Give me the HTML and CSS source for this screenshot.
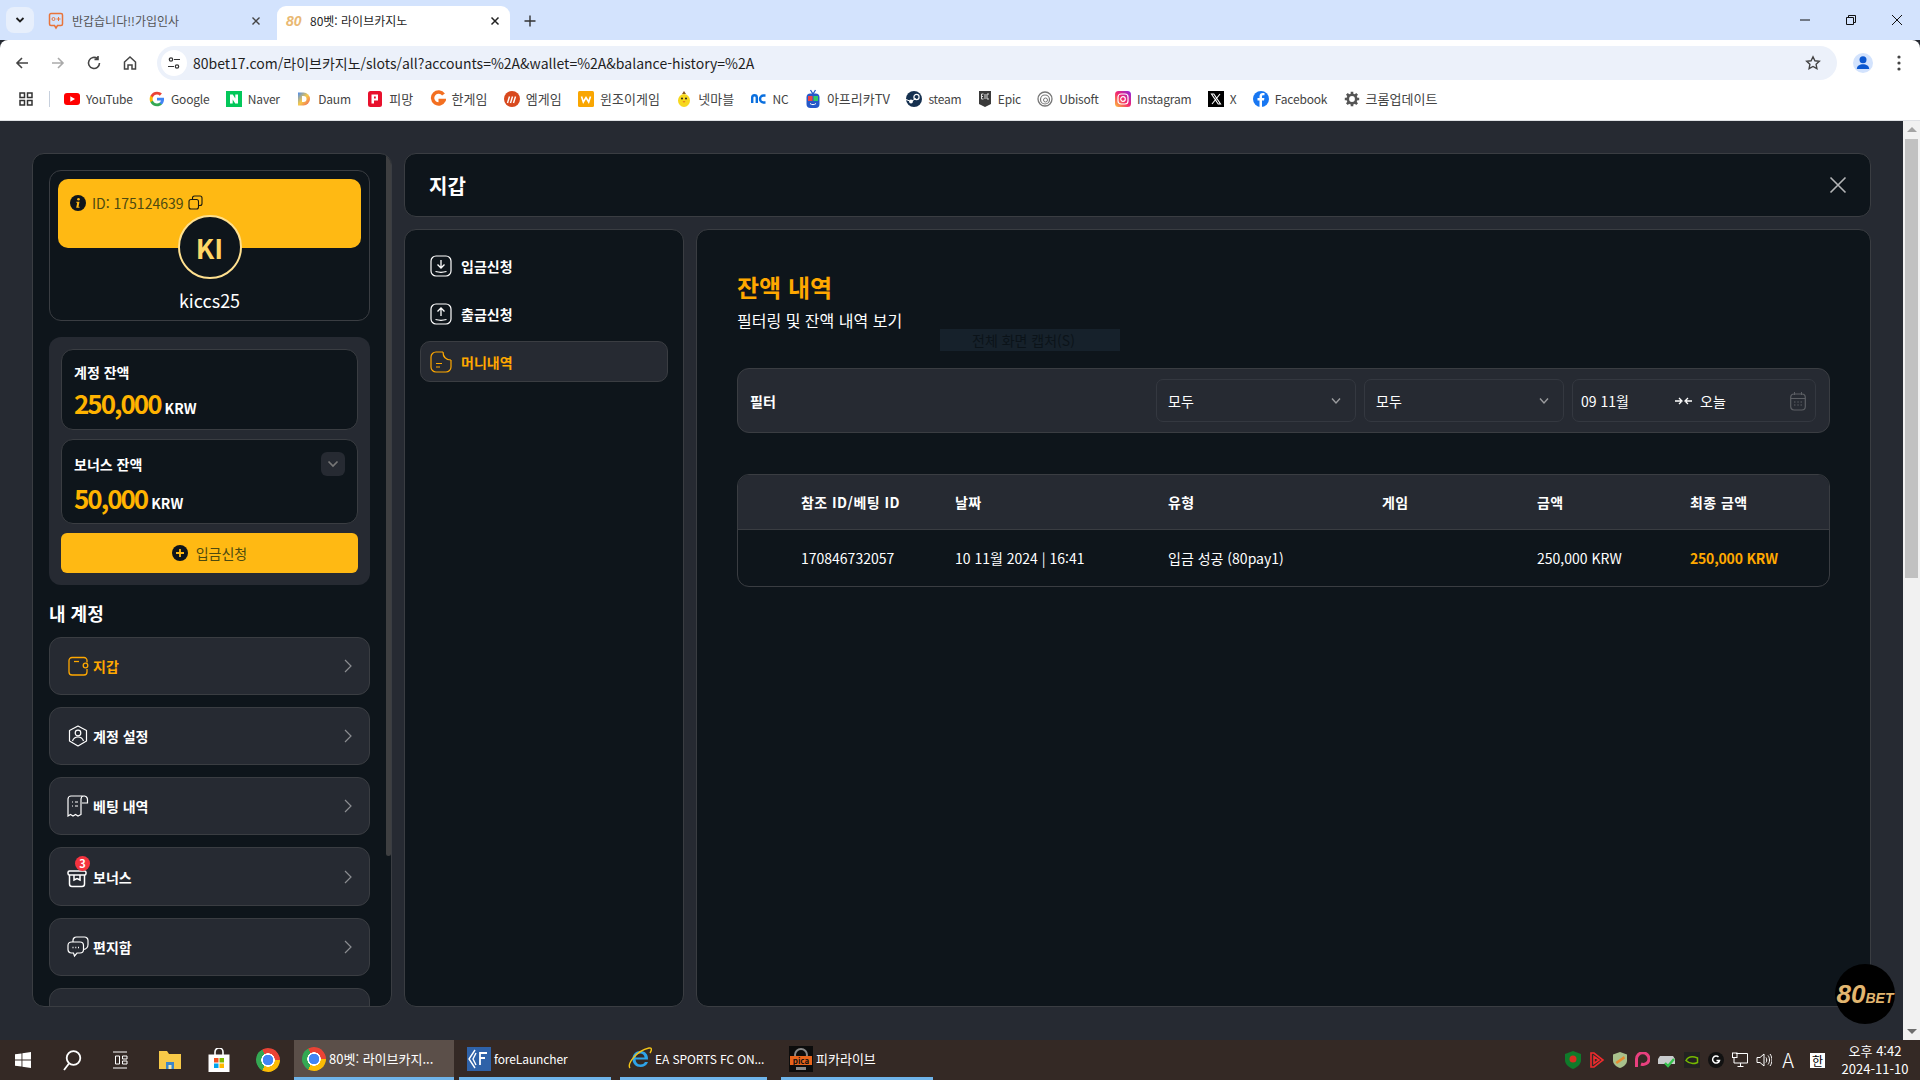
FILE: index.html
```html
<!DOCTYPE html>
<html lang="ko">
<head>
<meta charset="utf-8">
<title>80벳: 라이브카지노</title>
<link rel="stylesheet" href="styles.css">
</head>
<body>
<header class="tabstrip">
  <button class="tablist"><svg width="12" height="12" viewBox="0 0 12 12"><path d="M2.500 4l3.500 3.500L9.500 4" fill="none" stroke="#1f1f1f" stroke-width="1.800"/></svg></button>
  <div class="tab">
    <svg class="fav" width="16" height="18" viewBox="0 0 16 18"><path d="M3 1.500h10a1.500 1.500 0 0 1 1.500 1.500v9a1.500 1.500 0 0 1-1.500 1.500H9.500L8 16l-1.500-2.500H3A1.500 1.500 0 0 1 1.500 12V3A1.500 1.500 0 0 1 3 1.500z" fill="none" stroke="#e8743b" stroke-width="1.500"/><circle cx="5.500" cy="7" r="1.500" fill="none" stroke="#e8743b"/><path d="M10.500 5v4M8.500 7h4" stroke="#e8743b"/></svg>
    <span class="tab-title">반갑습니다!!가입인사</span>
    <svg class="tab-x" width="10" height="10" viewBox="0 0 10 10"><path d="M1.500 1.500l7 7M8.500 1.500l-7 7" stroke="#444" stroke-width="1.400"/></svg>
  </div>
  <div class="tab tab-active">
    <span class="fav80">80</span>
    <span class="tab-title">80벳: 라이브카지노</span>
    <svg class="tab-x" width="10" height="10" viewBox="0 0 10 10"><path d="M1.500 1.500l7 7M8.500 1.500l-7 7" stroke="#222" stroke-width="1.500"/></svg>
  </div>
  <svg class="newtab" width="12" height="12" viewBox="0 0 12 12"><path d="M6 .5v11M.5 6h11" stroke="#333" stroke-width="1.400"/></svg>
  <div class="winctl">
    <svg width="12" height="12" viewBox="0 0 12 12"><path d="M1 6h10" stroke="#111"/></svg>
    <svg width="12" height="12" viewBox="0 0 12 12"><path d="M1.500 3.500h7v7h-7zM3.500 3.500v-2h7v7h-2" fill="none" stroke="#111"/></svg>
    <svg width="12" height="12" viewBox="0 0 12 12"><path d="M1 1l10 10M11 1L1 11" stroke="#111"/></svg>
  </div>
</header>

<div class="toolbar">
  <svg class="tb" width="16" height="16" viewBox="0 0 16 16"><path d="M14 8H3M8 3L3 8l5 5" fill="none" stroke="#444" stroke-width="1.600"/></svg>
  <svg class="tb" width="16" height="16" viewBox="0 0 16 16"><path d="M2 8h11M8 3l5 5-5 5" fill="none" stroke="#aaa" stroke-width="1.600"/></svg>
  <svg class="tb" width="16" height="16" viewBox="0 0 16 16"><path d="M13.500 8A5.500 5.500 0 1 1 11.500 3.700M12 1v3.500H8.500" fill="none" stroke="#444" stroke-width="1.600"/></svg>
  <svg class="tb" width="16" height="16" viewBox="0 0 16 16"><path d="M2.500 7L8 2l5.500 5v7h-3.500v-4h-4v4H2.500z" fill="none" stroke="#444" stroke-width="1.500"/></svg>
  <div class="omnibox">
    <span class="site-ic"><svg width="14" height="14" viewBox="0 0 14 14"><circle cx="4" cy="3.500" r="1.700" fill="none" stroke="#333" stroke-width="1.200"/><path d="M7 3.500h6M1 10.500h6" stroke="#333" stroke-width="1.200"/><circle cx="10" cy="10.500" r="1.700" fill="none" stroke="#333" stroke-width="1.200"/></svg></span>
    <span class="url">80bet17.com/라이브카지노/slots/all?accounts=%2A&amp;wallet=%2A&amp;balance-history=%2A</span>
    <svg class="star" width="16" height="16" viewBox="0 0 16 16"><path d="M8 1.800l1.900 4 4.400.5-3.200 3 .8 4.400L8 11.500l-3.900 2.200.8-4.400-3.200-3 4.400-.5z" fill="none" stroke="#444" stroke-width="1.400"/></svg>
  </div>
  <span class="avatar-chip"><svg width="20" height="20" viewBox="0 0 20 20"><circle cx="10" cy="6.800" r="3.500" fill="#0b57d0"/><path d="M3.800 16c0-3.300 3-4.800 6.200-4.800s6.200 1.500 6.200 4.800z" fill="#0b57d0"/></svg></span>
  <svg class="menu-dots" width="4" height="16" viewBox="0 0 4 16"><circle cx="2" cy="2" r="1.600" fill="#444"/><circle cx="2" cy="8" r="1.600" fill="#444"/><circle cx="2" cy="14" r="1.600" fill="#444"/></svg>
</div>

<nav class="bookmarks">
  <svg class="apps" width="14" height="14" viewBox="0 0 14 14"><path d="M1 1h4.500v4.500H1zM8.500 1H13v4.500H8.500zM1 8.500h4.500V13H1zM8.500 8.500H13V13H8.500z" fill="none" stroke="#333" stroke-width="1.500"/></svg>
  <i class="bm-sep"></i>
  <a class="bm"><svg width="16" height="16" viewBox="0 0 16 16"><rect y="2" width="16" height="12" rx="3" fill="#f00"/><path d="M6.300 5.200L11 8l-4.700 2.800z" fill="#fff"/></svg>YouTube</a>
  <a class="bm"><svg width="16" height="16" viewBox="0 0 24 24"><path d="M22.560 12.250c0-.78-.07-1.530-.2-2.250H12v4.260h5.920c-.26 1.370-1.040 2.530-2.210 3.310v2.770h3.570c2.080-1.920 3.280-4.740 3.280-8.090z" fill="#4285F4"/><path d="M12 23c2.970 0 5.460-.98 7.280-2.660l-3.570-2.770c-.98.66-2.230 1.060-3.710 1.060-2.860 0-5.290-1.930-6.160-4.530H2.180v2.840C3.990 20.530 7.700 23 12 23z" fill="#34A853"/><path d="M5.840 14.090c-.22-.66-.35-1.360-.35-2.090s.13-1.430.35-2.090V7.070H2.180C1.430 8.550 1 10.220 1 12s.43 3.450 1.180 4.930l3.660-2.840z" fill="#FBBC05"/><path d="M12 5.380c1.620 0 3.060.56 4.210 1.640l3.150-3.150C17.450 2.090 14.970 1 12 1 7.700 1 3.990 3.470 2.180 7.070l3.660 2.840c.87-2.600 3.300-4.530 6.160-4.530z" fill="#EA4335"/></svg>Google</a>
  <a class="bm"><svg width="16" height="16" viewBox="0 0 16 16"><rect width="16" height="16" fill="#03c75a"/><path d="M4 3.500h2.800l2.500 4v-4H12v9H9.200l-2.500-4v4H4z" fill="#fff"/></svg>Naver</a>
  <a class="bm"><svg width="16" height="16" viewBox="0 0 16 16"><defs><linearGradient id="dg" x1="0" y1="0" x2="1" y2="1"><stop offset="0" stop-color="#4a8cf0"/><stop offset=".5" stop-color="#f7c948"/><stop offset="1" stop-color="#ee5a5a"/></linearGradient></defs><path d="M2 1.500h5.500a6.500 6.500 0 0 1 0 13H2z" fill="url(#dg)"/><path d="M6 5h1.500a3 3 0 0 1 0 6H6z" fill="#fff"/></svg>Daum</a>
  <a class="bm bm-ko"><svg width="16" height="16" viewBox="0 0 16 16"><rect x="1" width="14" height="16" rx="2.500" fill="#e8112d"/><path d="M4.500 3.500H11v6H7v3H4.500zM7 5.500v2h1.800v-2z" fill="#fff" fill-rule="evenodd"/></svg>피망</a>
  <a class="bm bm-ko"><svg width="16" height="18" viewBox="0 0 16 18"><path d="M13.500 4.500A6 6 0 1 0 14 10.500H8.500" fill="none" stroke="#f36f21" stroke-width="3.400"/></svg>한게임</a>
  <a class="bm bm-ko"><svg width="16" height="16" viewBox="0 0 16 16"><circle cx="8" cy="8" r="8" fill="#d8491e"/><path d="M3.500 12l2-6.500M6.500 12l2-6.500M9.500 12l2-6.500" stroke="#fff" stroke-width="1.400"/></svg>엠게임</a>
  <a class="bm bm-ko"><svg width="16" height="16" viewBox="0 0 16 16"><rect width="16" height="16" rx="1.500" fill="#f9a602"/><path d="M3.500 5.500l1.800 5.500 2.700-4.500 2.700 4.500 1.800-5.500" fill="none" stroke="#fff" stroke-width="1.600"/></svg>윈조이게임</a>
  <a class="bm bm-ko"><svg width="16" height="18" viewBox="0 0 16 18"><ellipse cx="8" cy="10.500" rx="6" ry="6.500" fill="#f7d81e"/><path d="M8 1l2 3H6z" fill="#8a5a1e"/><circle cx="6" cy="8.500" r="1" fill="#222"/><circle cx="10" cy="8.500" r="1" fill="#222"/><path d="M6.500 11h3L8 13z" fill="#e8871e"/></svg>넷마블</a>
  <a class="bm"><svg width="16" height="16" viewBox="0 0 16 16"><path d="M1.200 12V6.500a2.300 2.300 0 0 1 4.600 0V12M14.500 4.500h-2a3.500 3.500 0 0 0 0 7h2" fill="none" stroke="#0a6fde" stroke-width="2.400"/></svg>NC</a>
  <a class="bm bm-ko"><svg width="16" height="20" viewBox="0 0 16 20"><path d="M5.500 1L8 5l2.500-4" fill="none" stroke="#2458c8" stroke-width="1.300"/><rect x="1.500" y="4.500" width="13" height="14.500" rx="4" fill="#2458c8"/><rect x="3" y="7" width="4.500" height="5" fill="#e44"/><rect x="8.500" y="7" width="4.500" height="5" fill="#3c6"/><path d="M5 14.500c1.800 1.500 4.200 1.500 6 0" stroke="#fff" fill="none"/></svg>아프리카TV</a>
  <a class="bm"><svg width="16" height="16" viewBox="0 0 16 16"><circle cx="8" cy="8" r="8" fill="#15304f"/><circle cx="10.500" cy="6" r="2.600" fill="none" stroke="#fff" stroke-width="1.200"/><circle cx="5" cy="10.500" r="1.900" fill="#fff"/><path d="M0 8.500l5 2 5-3" stroke="#fff" fill="none"/></svg>steam</a>
  <a class="bm"><svg width="14" height="18" viewBox="0 0 14 18"><path d="M1 1h12v13l-6 3-6-3z" fill="#3a3a3a"/><path d="M3.500 4h2M3.500 4v5h2M3.500 6.500h1.500M7 4v5M9 4h2M9 4v5h2" stroke="#ddd" fill="none"/></svg>Epic</a>
  <a class="bm"><svg width="16" height="16" viewBox="0 0 16 16"><circle cx="8" cy="8" r="7" fill="none" stroke="#777" stroke-width="1.300"/><circle cx="8" cy="8.500" r="4.500" fill="none" stroke="#777" stroke-width="1.200"/><circle cx="8.500" cy="9" r="2" fill="none" stroke="#777"/></svg>Ubisoft</a>
  <a class="bm"><svg width="16" height="16" viewBox="0 0 16 16"><defs><linearGradient id="ig" x1="0" y1="1" x2="1" y2="0"><stop offset="0" stop-color="#fdc13a"/><stop offset=".5" stop-color="#f2266e"/><stop offset="1" stop-color="#8a2be2"/></linearGradient></defs><rect width="16" height="16" rx="3.500" fill="url(#ig)"/><rect x="3" y="3" width="10" height="10" rx="3" fill="none" stroke="#fff" stroke-width="1.200"/><circle cx="8" cy="8" r="2.300" fill="none" stroke="#fff" stroke-width="1.200"/></svg>Instagram</a>
  <a class="bm"><svg width="16" height="16" viewBox="0 0 16 16"><rect width="16" height="16" fill="#000"/><path d="M3.500 3h2.300l6.700 10h-2.300zM12 3L4 13" fill="none" stroke="#fff" stroke-width="1.100"/></svg>X</a>
  <a class="bm"><svg width="16" height="16" viewBox="0 0 16 16"><circle cx="8" cy="8" r="8" fill="#1877f2"/><path d="M9 16V9.500h2l.4-2.500H9V5.600c0-.8.300-1.300 1.400-1.300h1.100V2.100C11 2 10.400 2 9.800 2 7.800 2 6.500 3.200 6.500 5.300V7H4.500v2.500h2V16z" fill="#fff"/></svg>Facebook</a>
  <a class="bm bm-ko"><svg width="16" height="16" viewBox="0 0 16 16"><circle cx="8" cy="8" r="4.200" fill="none" stroke="#555" stroke-width="2.600"/><path d="M8 .8v3M8 12.200v3M.8 8h3M12.200 8h3M2.900 2.900L5 5M11 11l2.100 2.100M13.100 2.900L11 5M5 11l-2.100 2.100" stroke="#555" stroke-width="2.600"/></svg>크롬업데이트</a>
</nav>

<div class="viewport">
  <main class="page">
    <aside class="sidebar">
      <section class="profile">
        <div class="banner">
          <svg width="16" height="16" viewBox="0 0 16 16"><circle cx="8" cy="8" r="8" fill="#0e151b"/><circle cx="8.500" cy="4.300" r="1.300" fill="#ffb913"/><path d="M6.300 6.800h3.200l-1 5h1v1H6.200l1-5h-.9z" fill="#ffb913"/></svg>
          <span class="uid">ID: 175124639</span>
          <svg width="15" height="15" viewBox="0 0 15 15"><rect x="1" y="4.500" width="9.500" height="9.500" rx="2" fill="none" stroke="#1a1a10" stroke-width="1.100"/><path d="M4.500 4.500V3a2 2 0 0 1 2-2H12a2 2 0 0 1 2 2v5.500a2 2 0 0 1-2 2h-1.500" fill="none" stroke="#1a1a10" stroke-width="1.100"/></svg>
        </div>
        <div class="avatar">KI</div>
        <div class="uname">kiccs25</div>
      </section>

      <section class="balances">
        <div class="bal-card">
          <div class="bal-label">계정 잔액</div>
          <div class="bal-amt"><b>250,000</b> <span>KRW</span></div>
        </div>
        <div class="bal-card bal-bonus">
          <div class="bal-label">보너스 잔액</div>
          <div class="bal-amt"><b>50,000</b> <span>KRW</span></div>
          <span class="bal-toggle"><svg width="12" height="12" viewBox="0 0 12 12"><path d="M1.500 3.500L6 8l4.500-4.500" fill="none" stroke="#777" stroke-width="1.700"/></svg></span>
        </div>
        <button class="deposit">
          <svg width="16" height="16" viewBox="0 0 16 16"><circle cx="8" cy="8" r="8" fill="#0e151b"/><path d="M8 4v8M4 8h8" stroke="#ffb913" stroke-width="1.800"/></svg>
          <span>입금신청</span>
        </button>
      </section>

      <h2 class="my-title">내 계정</h2>
      <ul class="menu">
        <li class="menu-item is-active">
          <svg width="22" height="22" viewBox="0 0 22 22"><path d="M20 7.500V5.500a3 3 0 0 0-3-3H5a3 3 0 0 0-3 3V17a3 3 0 0 0 3 3h12a3 3 0 0 0 3-3v-3" fill="none" stroke="#ffa800" stroke-width="1.300"/><path d="M7 6.500h5" stroke="#ffa800" stroke-width="1.300"/><circle cx="18.500" cy="10.500" r="2.300" fill="none" stroke="#ffa800" stroke-width="1.300"/></svg>
          <span>지갑</span><svg class="chev" width="8" height="14" viewBox="0 0 8 14"><path d="M1 1l6 6-6 6" fill="none" stroke="#8b8d91" stroke-width="1.200"/></svg>
        </li>
        <li class="menu-item">
          <svg width="22" height="22" viewBox="0 0 22 22"><path d="M11 1l8.500 4.500v10.500L11 21l-8.500-5V5.500z" fill="none" stroke="#fff" stroke-width="1.200" stroke-linejoin="round"/><circle cx="11" cy="8" r="2.800" fill="none" stroke="#fff" stroke-width="1.200"/><path d="M5.500 16c1-3 3-4 5.500-4s4.500 1 5.500 4" fill="none" stroke="#fff" stroke-width="1.200"/></svg>
          <span>계정 설정</span><svg class="chev" width="8" height="14" viewBox="0 0 8 14"><path d="M1 1l6 6-6 6" fill="none" stroke="#8b8d91" stroke-width="1.200"/></svg>
        </li>
        <li class="menu-item">
          <svg width="22" height="22" viewBox="0 0 22 22"><path d="M18 1H4a3 3 0 0 0-3 3v17l2.500-1.500L6 21l2.500-1.500L11 21l3-1.500V4a3 3 0 0 1 3-3 3.500 3.500 0 0 1 3.500 3.500V8H15" fill="none" stroke="#fff" stroke-width="1.200"/><path d="M5 7h1M8 7h3M5 11h1M8 11h3" stroke="#fff" stroke-width="1.200"/></svg>
          <span>베팅 내역</span><svg class="chev" width="8" height="14" viewBox="0 0 8 14"><path d="M1 1l6 6-6 6" fill="none" stroke="#8b8d91" stroke-width="1.200"/></svg>
        </li>
        <li class="menu-item menu-bonus">
          <span class="gift"><svg width="22" height="22" viewBox="0 0 22 22"><rect x="1" y="5" width="18" height="4" rx="1.500" fill="none" stroke="#fff" stroke-width="1.500"/><path d="M2.500 9v9a2.500 2.500 0 0 0 2.500 2.500h10a2.500 2.500 0 0 0 2.500-2.500V9M7 9v5l3-1.500 3 1.500V9" fill="none" stroke="#fff" stroke-width="1.500"/></svg><em class="badge">3</em></span>
          <span>보너스</span><svg class="chev" width="8" height="14" viewBox="0 0 8 14"><path d="M1 1l6 6-6 6" fill="none" stroke="#8b8d91" stroke-width="1.200"/></svg>
        </li>
        <li class="menu-item">
          <svg width="22" height="22" viewBox="0 0 22 22"><path d="M4.500 6h8.500a3.500 3.500 0 0 1 3.500 3.500v4a3.500 3.500 0 0 1-3.500 3.500h-3l-2.500 3-1-3h-2A3.500 3.500 0 0 1 1 13.500v-4A3.500 3.500 0 0 1 4.500 6z" fill="none" stroke="#fff" stroke-width="1.200"/><path d="M6 6V4.500A3.500 3.500 0 0 1 9.500 1h8A3.500 3.500 0 0 1 21 4.500v4a5 5 0 0 1-4.500 5" fill="none" stroke="#fff" stroke-width="1.200"/><path d="M5.500 11.500h1M8.300 11.500h1M11 11.500h1" stroke="#fff" stroke-width="1.300"/></svg>
          <span>편지함</span><svg class="chev" width="8" height="14" viewBox="0 0 8 14"><path d="M1 1l6 6-6 6" fill="none" stroke="#8b8d91" stroke-width="1.200"/></svg>
        </li>
        <li class="menu-item"><svg width="22" height="22" viewBox="0 0 22 22"><circle cx="11" cy="11" r="10" fill="none" stroke="#fff" stroke-width="1.200"/></svg></li>
      </ul>
      <i class="side-thumb"></i>
    </aside>

    <div class="main">
      <header class="main-head">
        <h1>지갑</h1>
        <svg width="18" height="18" viewBox="0 0 18 18"><path d="M1.500 1.500l15 15M16.500 1.500l-15 15" stroke="#b4b5b7" stroke-width="1.600"/></svg>
      </header>
      <div class="main-row">
        <nav class="wallet-nav">
          <a class="wn">
            <svg width="22" height="22" viewBox="0 0 22 22"><rect x="1" y="1" width="20" height="20" rx="5" fill="none" stroke="#fff" stroke-width="1.200"/><path d="M11 5v8M7.500 9.500L11 13l3.500-3.500" fill="none" stroke="#fff" stroke-width="1.300"/><path d="M5.500 16.500c3.500 1 7.500 1 11 0" fill="none" stroke="#fff" stroke-width="1.200"/></svg>
            입금신청
          </a>
          <a class="wn">
            <svg width="22" height="22" viewBox="0 0 22 22"><rect x="1" y="1" width="20" height="20" rx="5" fill="none" stroke="#fff" stroke-width="1.200"/><path d="M11 13V5M7.500 8.500L11 5l3.500 3.500" fill="none" stroke="#fff" stroke-width="1.300"/><path d="M5.500 16.500c3.500 1 7.500 1 11 0" fill="none" stroke="#fff" stroke-width="1.200"/></svg>
            출금신청
          </a>
          <a class="wn is-on">
            <svg width="22" height="22" viewBox="0 0 22 22"><path d="M13 1H6a5 5 0 0 0-5 5v10a5 5 0 0 0 5 5h10a5 5 0 0 0 5-5V9" fill="none" stroke="#ffa800" stroke-width="1.200"/><path d="M13 1c0 5 3 8 8 8-4.500 0-8-3-8-8z" fill="none" stroke="#ffa800" stroke-width="1.200"/><path d="M6 12.500h6M6 16h4" stroke="#ffa800" stroke-width="1.200"/></svg>
            머니내역
          </a>
        </nav>
        <section class="content">
          <h2 class="c-title">잔액 내역</h2>
          <p class="c-sub">필터링 및 잔액 내역 보기</p>
          <div class="filter">
            <strong class="f-label">필터</strong>
            <div class="sel"><span>모두</span><svg width="10" height="8" viewBox="0 0 10 8"><path d="M1 1.500L5 6l4-4.500" fill="none" stroke="#9a9b9e" stroke-width="1.400"/></svg></div>
            <div class="sel"><span>모두</span><svg width="10" height="8" viewBox="0 0 10 8"><path d="M1 1.500L5 6l4-4.500" fill="none" stroke="#9a9b9e" stroke-width="1.400"/></svg></div>
            <div class="sel sel-date">
              <span class="d-from">09 11월</span>
              <svg width="17" height="8" viewBox="0 0 17 8"><path d="M0 4h6M4 1l3 3-3 3M17 4h-6M13 1l-3 3 3 3" fill="none" stroke="#fff" stroke-width="1.300"/></svg>
              <span class="d-to">오늘</span>
              <svg width="16" height="20" viewBox="0 0 16 20"><rect x=".7" y="3" width="14.600" height="16" rx="3.500" fill="none" stroke="#5c5f64" stroke-width="1.200"/><path d="M.7 7.500h14.600M4.500 1v3M11.500 1v3M4 11h1.500M7.300 11h1.500M10.500 11h1.500M4 14h1.500M7.300 14h1.500M10.500 14h1.500" stroke="#5c5f64" fill="none"/></svg>
            </div>
          </div>
          <div class="table">
            <div class="tr th"><span>참조 ID/베팅 ID</span><span>날짜</span><span>유형</span><span>게임</span><span>금액</span><span>최종 금액</span></div>
            <div class="tr td"><span>170846732057</span><span>10 11월 2024 | 16:41</span><span>입금 성공 (80pay1)</span><span></span><span>250,000 KRW</span><span class="final">250,000 KRW</span></div>
          </div>
        </section>
      </div>
    </div>

    <div class="capture-tip">전체 화면 캡처(S)</div>
    <div class="bet-badge"><b>80</b><span>BET</span></div>
  </main>
  <div class="vscroll"><i class="arr-up"></i><i class="vthumb"></i><i class="arr-down"></i></div>
</div>

<footer class="taskbar">
  <svg class="ts ts-win" width="16" height="16" viewBox="0 0 16 16"><path d="M0 2.300L6.500 1.400v6.200H0zM7.400 1.300L16 0v7.600H7.400zM0 8.500h6.500v6.100L0 13.700zM7.400 8.500H16V16l-8.600-1.300z" fill="#fff"/></svg>
  <svg class="ts ts-search" width="22" height="22" viewBox="0 0 22 22"><circle cx="12.500" cy="9" r="6.800" fill="none" stroke="#fff" stroke-width="1.800"/><path d="M8 14.500L3 21" stroke="#fff" stroke-width="1.800"/></svg>
  <svg class="ts ts-view" width="16" height="18" viewBox="0 0 16 18"><path d="M1 1h14M3.500 5h4v8h-4zM10.500 5H15v3h-4.500zM10.500 10H15v3h-4.500zM1 17h14" fill="none" stroke="#fff"/></svg>
  <svg class="ts ts-files" width="24" height="22" viewBox="0 0 24 22"><path d="M1 2h8l2 3h12v15H1z" fill="#f7c948"/><path d="M8 13h8v7H8z" fill="#3d87c9"/><path d="M10.500 16h3v4h-3z" fill="#f7e7a8"/></svg>
  <svg class="ts ts-store" width="24" height="24" viewBox="0 0 24 24"><path d="M1.500 6.500h21V24h-21z" fill="#fff"/><path d="M8 7V4a4 4 0 0 1 8 0v3" fill="none" stroke="#fff" stroke-width="1.600"/><path d="M7 10h4.500v4.500H7z" fill="#f25022"/><path d="M12.500 10H17v4.500h-4.500z" fill="#7fba00"/><path d="M7 15.500h4.500V20H7z" fill="#00a4ef"/><path d="M12.500 15.500H17V20h-4.500z" fill="#ffb900"/></svg>
  <i class="chrome-logo"></i>
  <div class="task is-cur"><i class="chrome-logo"></i><span>80벳: 라이브카지...</span></div>
  <div class="task t2"><svg width="24" height="24" viewBox="0 0 24 24"><rect width="24" height="24" fill="#2f62a8"/><path d="M8 3L2 12l6 9M9 6l-3 6 3 6" fill="none" stroke="#fff" stroke-width="1.400"/><path d="M13 18V6h7M13 11h5" fill="none" stroke="#fff" stroke-width="1.800"/></svg><span class="t-latin">foreLauncher</span></div>
  <div class="task t3"><svg width="24" height="26" viewBox="0 0 24 26"><path d="M20 13.500H7.500c.2 3 2.200 5 5 5 2 0 3.500-.8 4.500-2.500h3c-1.200 3.200-4 5-7.500 5-4.800 0-8-3.400-8-8s3.200-8 8-8 7.800 3.500 7.500 8.500zM7.600 11.500h9c-.3-2.500-2-4-4.500-4s-4.200 1.500-4.500 4z" fill="#2ea3e8"/><path d="M2 22C-1 18 8 5 21 2c3-.5 3 2 1 5" fill="none" stroke="#f5c518" stroke-width="1.400"/></svg><span class="t-latin">EA SPORTS FC ON...</span></div>
  <div class="task t4"><svg width="24" height="26" viewBox="0 0 24 26"><rect width="24" height="26" fill="#0c0c0c"/><circle cx="12" cy="9" r="6" fill="none" stroke="#888" stroke-width="2"/><rect x="1" y="10" width="22" height="9" fill="#e8641b"/><text x="12" y="17.500" font-size="8" font-weight="700" text-anchor="middle" fill="#111">pica</text><rect x="7" y="21" width="10" height="3" fill="#888"/></svg><span>피카라이브</span></div>
  <div class="tray">
    <svg width="16" height="18" viewBox="0 0 16 18"><path d="M8 0l8 3v6c0 4-3 7-8 9-5-2-8-5-8-9V3z" fill="#0f7a2a"/><circle cx="8" cy="8" r="3.500" fill="#d62d20"/></svg>
    <svg width="16" height="16" viewBox="0 0 16 16"><path d="M2 1h3l9 7-9 7H2zM5 4.500v7L10 8z" fill="none" stroke="#ef2b2d" stroke-width="1.600"/></svg>
    <svg width="14" height="16" viewBox="0 0 14 16"><path d="M7 0l7 2.500v6c0 3.500-3 6-7 7.500-4-1.500-7-4-7-7.500v-6z" fill="#a9c18c"/><path d="M2.500 10L11 4l1 2.500L4 12z" fill="#e88b2e"/></svg>
    <svg width="15" height="16" viewBox="0 0 15 16"><path d="M1.500 15V7A6 6 0 0 1 14 7a5.800 5.800 0 0 1-8 5" fill="none" stroke="#e9407f" stroke-width="3"/></svg>
    <svg width="18" height="16" viewBox="0 0 18 16"><path d="M2 4h13l2 3v5H0V7z" fill="#c9cbcd"/><path d="M7 11l3 3 6-7" fill="none" stroke="#36c24c" stroke-width="2.400"/></svg>
    <svg width="16" height="16" viewBox="0 0 16 16"><rect width="16" height="16" fill="#222"/><path d="M2 8.500C4 5 8 3.800 13.500 6v4.500c-4 1.800-8 1.500-11.500-2z" fill="none" stroke="#76b900" stroke-width="1.500"/></svg>
    <svg width="16" height="16" viewBox="0 0 16 16"><circle cx="8" cy="8" r="8" fill="#111"/><path d="M10.500 5A3.500 3.500 0 1 0 11.500 8.500H8.500" fill="none" stroke="#fff" stroke-width="1.500"/></svg>
    <svg width="16" height="16" viewBox="0 0 16 16"><path d="M4 1.500h11.500v9.500H2V6M8.500 11v3M5.500 14.500h6" fill="none" stroke="#fff"/><rect x=".5" y="1" width="4.500" height="4.500" fill="none" stroke="#fff"/></svg>
    <svg width="16" height="16" viewBox="0 0 16 16"><path d="M1 5.500h3L8 2v12l-4-3.500H1zM10 5.500c1 1.500 1 3.500 0 5M12 3.500c2 2.500 2 6.500 0 9M14 2c2.600 3.500 2.600 8.500 0 12" fill="none" stroke="#fff"/></svg>
    <span class="tray-a">A</span>
    <span class="tray-han">한</span>
    <div class="clock"><span>오후 4:42</span><span>2024-11-10</span></div>
  </div>
</footer>
</body>
</html>
```

FILE: styles.css
```css
* { box-sizing: border-box; }
html, body { margin: 0; padding: 0; }
body {
  width: 1920px; height: 1080px; overflow: hidden;
  display: flex; flex-direction: column;
  font-family: "Noto Sans CJK KR", "Noto Sans", sans-serif;
  color: #fff; background: #262a32;
}
svg { display: block; flex: none; }
i, em { font-style: normal; }
h1, h2, p, ul { margin: 0; padding: 0; }
li { list-style: none; }

/* tab strip */
.tabstrip { height: 40px; flex: none; background: #d3e3fd; display: flex; align-items: flex-end; padding-left: 6px; position: relative; }
.tablist { width: 28px; height: 26px; margin: 0 8px 7px 0; border: 0; border-radius: 8px; background: #e7effc; display: flex; align-items: center; justify-content: center; padding: 0; }
.tab { width: 238px; height: 34px; display: flex; align-items: center; padding: 0 19px 4px 6px; font-size: 12px; color: #555; gap: 8px; }
.tab-title { flex: 1; white-space: nowrap; overflow: hidden; line-height: 16px; }
.tab-active { width: 233px; background: #fff; color: #1f1f1f; border-radius: 9px 9px 0 0; padding: 0 10px 4px 9px; margin-left: -3px; }
.fav80 { width: 16px; color: #e9b872; font: italic 700 14px "Liberation Sans", sans-serif; }
.newtab { margin: 0 0 13px 14px; }
.winctl { margin-left: auto; display: flex; gap: 34px; padding: 0 17px 14px 0; }

/* toolbar */
.toolbar { height: 48px; flex: none; background: #fff; border-radius: 8px 8px 0 0; display: flex; align-items: center; padding: 0 0 2px 14px; }
.tb { margin-right: 20px; }
.omnibox { width: 1680px; margin-left: -1px; height: 34px; border-radius: 17px; background: #ecf1fa; display: flex; align-items: center; padding: 0 16px 0 4px; }
.site-ic { width: 26px; height: 26px; border-radius: 50%; background: #fff; display: flex; align-items: center; justify-content: center; }
.url { font-size: 14px; margin-left: 6px; color: #1f1f1f; flex: 1; white-space: nowrap; }
.avatar-chip { width: 20px; height: 20px; margin-left: 16px; border-radius: 50%; background: #d3e3fd; display: flex; align-items: center; justify-content: center; }
.menu-dots { margin-left: 24px; }

/* bookmarks */
.bookmarks { height: 33px; flex: none; background: #fff; border-bottom: 1px solid #dfe1e5; display: flex; align-items: center; padding: 0 0 11px 19px; }
.bm-sep { width: 1px; height: 16px; background: #c7d0dd; margin: 0 14px 0 16px; }
.bm { display: flex; align-items: center; gap: 6px; font-size: 12px; letter-spacing: -.2px; color: #444; white-space: nowrap; margin-right: 16.4px; }
.bm-ko { font-size: 13px; letter-spacing: 0; }

/* page */
.viewport { flex: 1; min-height: 0; display: flex; }
.page { flex: 1; position: relative; display: flex; gap: 12px; padding: 32px 32px 33px 32px; background: #262a32; min-width: 0; }

.vscroll { width: 17px; flex: none; background: #f1f1f1; display: flex; flex-direction: column; align-items: center; padding: 6px 0; }
.arr-up { width: 0; height: 0; border: 5px solid transparent; border-top: 0; border-bottom: 5px solid #a3a3a3; }
.vthumb { width: 13px; height: 439px; margin-top: 7px; background: #c1c1c1; }
.arr-down { width: 0; height: 0; margin-top: auto; border: 5px solid transparent; border-bottom: 0; border-top: 5px solid #6e6e6e; }

/* sidebar */
.sidebar { width: 360px; flex: none; position: relative; overflow: hidden; padding: 16px 21px 0 16px; background: #0e151b; border: 1px solid #3a3d42; border-radius: 12px; }
.side-thumb { position: absolute; top: 0; right: 0; width: 5px; height: 702px; background: #3e3f41; border-radius: 0 0 3px 3px; }
.profile { height: 151px; border: 1px solid #3a3d42; border-radius: 12px; padding: 8px; display: flex; flex-direction: column; align-items: center; }
.banner { width: 100%; height: 69px; flex: none; background: #ffb913; border-radius: 10px; display: flex; align-items: flex-start; padding: 16px 12px; gap: 6px; }
.uid { font-size: 14px; line-height: 16px; color: #4d4a10; margin-right: -2px; }
.avatar { width: 64px; height: 64px; margin-top: -33px; flex: none; border-radius: 50%; background: #0e151b; border: 2px solid #ffe08f; position: relative; display: flex; align-items: center; justify-content: center; font-size: 27px; font-weight: 700; color: #ffd766; }
.uname { font-size: 18px; line-height: 24px; margin-top: 9px; }

.balances { margin-top: 16px; background: #262a32; border-radius: 12px; padding: 12px; display: flex; flex-direction: column; gap: 9px; height: 248px; }
.bal-card { height: 81px; flex: none; position: relative; background: #0e151b; border: 1px solid #3a3d42; border-radius: 12px; padding: 12px; }
.bal-bonus { height: 85px; padding-top: 14px; }
.bal-bonus .bal-amt { margin-top: 6px; }
.bal-label { font-size: 14px; font-weight: 700; line-height: 20px; }
.bal-amt { margin-top: 3px; line-height: 36px; display: flex; align-items: baseline; gap: 4px; }
.bal-amt b { font-size: 26px; letter-spacing: -2px; color: #ffb300; }
.bal-amt span { font-size: 14px; font-weight: 700; }
.bal-toggle { position: absolute; top: 12px; right: 12px; width: 24px; height: 24px; border-radius: 6px; background: #262a32; display: flex; align-items: center; justify-content: center; }
.deposit { height: 40px; flex: none; border: 0; padding: 0; border-radius: 6px; background: #ffb913; display: flex; align-items: center; justify-content: center; gap: 8px; font: inherit; font-size: 14px; color: #4d4a10; }

.my-title { font-size: 18px; font-weight: 700; line-height: 26px; margin-top: 15px; }
.menu { margin-top: 11px; display: flex; flex-direction: column; gap: 12px; }
.menu-item { height: 58px; flex: none; display: flex; align-items: center; gap: 4px; padding: 0 17px; background: #262a32; border: 1px solid #3a3d42; border-radius: 12px; font-size: 14px; font-weight: 700; }
.menu-bonus { height: 59px; }
.menu-item .chev { margin-left: auto; }
.is-active { color: #ffa800; }
.gift { position: relative; display: block; width: 22px; height: 22px; }
.badge { position: absolute; top: -10px; left: 8px; width: 15px; height: 15px; border-radius: 50%; background: #f5333f; color: #fff; font-size: 11px; font-weight: 700; line-height: 15px; text-align: center; }

/* main */
.main { flex: 1; min-width: 0; display: flex; flex-direction: column; gap: 12px; }
.main-head { height: 64px; flex: none; background: #0e151b; border: 1px solid #3a3d42; border-radius: 12px; display: flex; align-items: center; justify-content: space-between; padding: 0 23px 0 24px; }
.main-head h1 { font-size: 20px; font-weight: 700; }
.main-row { flex: 1; min-height: 0; display: flex; gap: 12px; }
.wallet-nav { width: 280px; flex: none; background: #0e151b; border: 1px solid #3a3d42; border-radius: 12px; padding: 15px; display: flex; flex-direction: column; gap: 7px; }
.wn { height: 41px; flex: none; display: flex; align-items: center; gap: 9px; padding: 0 9px; border: 1px solid transparent; border-radius: 10px; font-size: 14px; font-weight: 700; }
.is-on { background: #262a32; border-color: #3a3d42; color: #ffa800; }

.content { flex: 1; min-width: 0; background: #0e151b; border: 1px solid #3a3d42; border-radius: 12px; padding: 40px 40px 0; }
.c-title { font-size: 24px; font-weight: 700; color: #ffa800; line-height: 34px; }
.c-sub { font-size: 16px; line-height: 24px; margin-top: 4px; }
.filter { margin-top: 36px; height: 65px; display: flex; align-items: center; gap: 8px; padding: 0 13px 0 12px; background: #262a32; border: 1px solid #3a3d42; border-radius: 12px; }
.f-label { flex: 1; font-size: 14px; font-weight: 700; }
.sel { width: 200px; height: 43px; flex: none; display: flex; align-items: center; justify-content: space-between; padding: 0 14px 0 11px; border: 1px solid #343840; border-radius: 7px; font-size: 14px; }
.sel-date { width: 244px; padding: 0 9px 0 8px; justify-content: flex-start; }
.d-from { width: 94px; }
.d-to { margin-left: 8px; flex: 1; }

.table { margin-top: 41px; border: 1px solid #3a3d42; border-radius: 12px; overflow: hidden; }
.tr { display: grid; grid-template-columns: 154px 213px 214px 155px 153px 1fr; padding-left: 63px; align-items: center; font-size: 14px; }
.th { height: 55px; background: #262a32; border-bottom: 1px solid #3a3d42; font-weight: 700; letter-spacing: .45px; }
.td { height: 56px; }
.final { color: #ffa800; font-weight: 700; letter-spacing: -.2px; }

.capture-tip { position: absolute; left: 940px; top: 208px; width: 180px; height: 22px; background: #16212b; color: #0b1319; font-size: 14px; line-height: 22px; padding-left: 32px; }
.bet-badge { position: absolute; left: 1835px; top: 843px; width: 60px; height: 60px; border-radius: 50%; background: #000; display: flex; align-items: baseline; justify-content: center; color: #e2b670; line-height: 60px; font-family: "Liberation Sans", sans-serif; font-style: italic; font-weight: 700; }
.bet-badge b { font-size: 26px; }
.bet-badge span { font-size: 14px; }

/* taskbar */
.taskbar { height: 40px; flex: none; background: #342925; display: flex; align-items: center; font-size: 13px; }
.ts-win { margin-left: 15px; }
.ts-search { margin-left: 30px; }
.ts-view { margin-left: 29px; }
.ts-files { margin-left: 30px; }
.ts-store { margin-left: 25px; }
.chrome-logo { display: block; flex: none; width: 24px; height: 24px; border-radius: 50%; background: radial-gradient(circle, #4285f4 0 5px, #fff 5.500px 6.500px, transparent 7px), conic-gradient(#ea4335 0 120deg, #fbbc05 120deg 240deg, #34a853 240deg); transform: rotate(-30deg); }
.taskbar > .chrome-logo { margin-left: 25px; }
.task { height: 40px; display: flex; align-items: center; gap: 3px; padding: 0 8px; white-space: nowrap; border-bottom: 3px solid #6fb4ea; color: #fff; }
.t-latin { font-size: 12px; letter-spacing: -.1px; }
.is-cur { width: 160px; margin-left: 14px; background: #5b4f49; }
.t2 { width: 152px; margin-left: 5px; }
.t3 { width: 147px; margin-left: 9px; }
.t4 { width: 152px; margin-left: 14px; }
.tray { margin-left: auto; display: flex; align-items: center; gap: 8px; padding-right: 12px; }
.tray-a { font-size: 20px; font-weight: 300; line-height: 22px; margin: 0 6px 0 2px; }
.tray-han { width: 15px; height: 15px; background: #fff; color: #000; font-size: 12px; line-height: 15px; text-align: center; margin: 0 9px 0 2px; }
.clock { width: 66px; display: flex; flex-direction: column; align-items: center; line-height: 18px; font-size: 13px; white-space: nowrap; }
```
